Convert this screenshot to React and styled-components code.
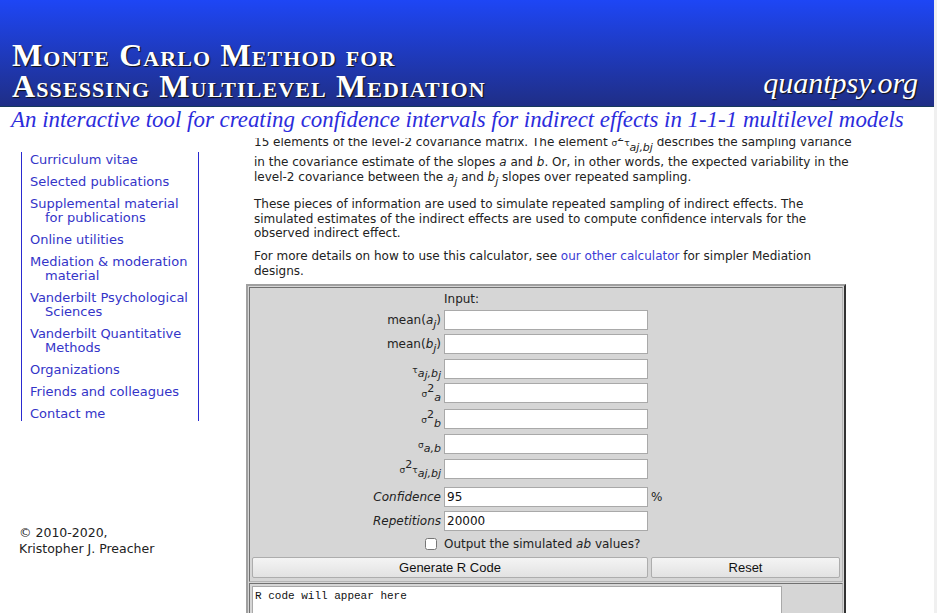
import React from 'react';
import styled, { createGlobalStyle, css } from 'styled-components';

const GlobalStyle = createGlobalStyle`
  html, body {
    margin: 0;
    padding: 0;
    overflow: hidden;
    background: #f0f0f0;
  }
  body {
    font-family: "DejaVu Sans", Verdana, sans-serif;
  }
`;

// sub/sup that do not stretch the line box
const scripts = css`
  sub, sup {
    font-size: 11px;
    line-height: 1;
    vertical-align: baseline;
    position: relative;
  }
  sub {
    top: 4px;
  }
  sup {
    top: -5px;
  }
`;

const Page = styled.div`
  width: 934px;
  height: 613px;
  background: #fff;
  overflow: hidden;
  display: flex;
  flex-direction: column;
`;

const Header = styled.header`
  flex: none;
  height: 107px;
  box-sizing: border-box;
  border-bottom: 1px solid #173a5c;
  background: linear-gradient(#1e46f5, #1f2e86);
  display: flex;
  align-items: flex-end;
  justify-content: space-between;
  padding: 0 16px 4px 12px;
`;

const Title = styled.h1`
  margin: 0;
  font-family: "Liberation Serif", "DejaVu Serif", serif;
  font-variant: small-caps;
  font-weight: bold;
  font-size: 32px;
  letter-spacing: 1.1px;
  line-height: 31px;
  color: #fff;
  text-shadow: 1px 1px 1px #111;
`;

const Site = styled.div`
  font-family: "Liberation Serif", "DejaVu Serif", serif;
  font-style: italic;
  font-size: 30px;
  line-height: 30px;
  padding-bottom: 4px;
  color: #fff;
  text-shadow: 1px 1px 1px #111;
`;

const Subtitle = styled.h2`
  flex: none;
  margin: 0;
  height: 31px;
  padding-left: 11px;
  font-family: "Liberation Serif", "DejaVu Serif", serif;
  font-style: italic;
  font-weight: normal;
  font-size: 22.9px;
  line-height: 25px;
  color: #2c2cdc;
  white-space: nowrap;
`;

const Body = styled.div`
  flex: 1;
  min-height: 0;
  display: flex;
`;

const Sidebar = styled.aside`
  flex: none;
  width: 246px;
  display: flex;
  flex-direction: column;
`;

const Nav = styled.ul`
  list-style: none;
  margin: 14px 0 0 21px;
  padding: 1px 0 0 8px;
  width: 168px;
  border-left: 1px solid #2a2ad0;
  border-right: 1px solid #2a2ad0;
  display: flex;
  flex-direction: column;
  gap: 8px;
`;

const NavLink = styled.a`
  display: block;
  padding-left: 15px;
  text-indent: -15px;
  font-size: 13px;
  line-height: 14px;
  color: #3434c8;
  text-decoration: none;
`;

const Copyright = styled.div`
  margin: auto 0 56px 19px;
  font-size: 12.5px;
  line-height: 16px;
  color: #222;
`;

const Main = styled.main`
  flex: none;
  width: 614px;
  overflow: hidden;
`;

const Content = styled.div`
  margin-top: -3px;
`;

const Para = styled.p`
  margin: 0 0 ${p => p.$gap || 7}px 8px;
  font-size: 12px;
  line-height: ${p => p.$lh || 15}px;
  color: #222;
  ${scripts}
`;

const LowSub = styled.span`
  display: inline-block;
  font-size: 11px;
  font-style: italic;
  line-height: 11px;
  vertical-align: -5px;
  padding-bottom: 2px;
`;

const Link = styled.a`
  color: #3a3ad6;
  text-decoration: none;
`;

const Table = styled.div`
  width: 600px;
  box-sizing: border-box;
  border: 2px solid;
  border-color: #a0a0a0 #333 #333 #a0a0a0;
  padding: 1px;
  background: #d6d6d6;
  display: flex;
  flex-direction: column;
  gap: 1px;
`;

const Cell = styled.div`
  border: 1px solid;
  border-color: #707070 #b4b4b4 #b4b4b4 #707070;
  padding: 2px 2px 3px;
  background: #d6d6d6;
`;

const FormGrid = styled.div`
  display: grid;
  grid-template-columns: 189px 204px 189px;
  grid-template-rows: 20px 24px 25px 24px 26px 25px 25px 28px 24px 24px 22px 21px;
  column-gap: 3px;
  align-items: start;
  font-size: 12px;
  color: #222;
`;

const Label = styled.div`
  text-align: right;
  white-space: nowrap;
  line-height: 20px;
  font-style: ${p => (p.$italic ? 'italic' : 'normal')};
  ${scripts}
  sub sub {
    top: 2px;
  }
`;

const Small = styled.span`
  font-size: 9px;
`;

const Heading = styled.div`
  grid-column: 2;
  padding-top: 1px;
  line-height: 16px;
`;

const Field = styled.input`
  box-sizing: border-box;
  width: 204px;
  height: 20px;
  margin: 0;
  padding: 0 2px;
  border: 1px solid #a9a9a9;
  background: #fff;
  font-family: "DejaVu Sans", sans-serif;
  font-size: 12px;
  color: #111;
  outline: none;
`;

const Unit = styled.div`
  line-height: 20px;
`;

const CheckText = styled.div`
  grid-column: 2 / 4;
  line-height: 18px;
`;

const Check = styled.input`
  justify-self: end;
  margin: 3px 4px 0 0;
  width: 12px;
  height: 12px;
`;

const Button = styled.button`
  box-sizing: border-box;
  height: 21px;
  margin: 0;
  border: 1px solid #adadad;
  border-radius: 2px;
  background: linear-gradient(#f4f4f4, #e2e2e2);
  font-family: "Liberation Sans", Arial, sans-serif;
  font-size: 13px;
  color: #111;
  grid-column: ${p => p.$span || 'auto'};
`;

const Output = styled.textarea`
  display: block;
  box-sizing: border-box;
  width: 530px;
  height: 200px;
  margin: 0;
  padding: 3px 2px;
  border: 1px solid #a9a9a9;
  resize: none;
  font-family: "Liberation Mono", monospace;
  font-size: 11px;
  color: #111;
`;

const navItems = [
  'Curriculum vitae',
  'Selected publications',
  'Supplemental material for publications',
  'Online utilities',
  'Mediation & moderation material',
  'Vanderbilt Psychological Sciences',
  'Vanderbilt Quantitative Methods',
  'Organizations',
  'Friends and colleagues',
  'Contact me',
];

export default function App() {
  return (
    <>
      <GlobalStyle />
      <Page>
        <Header>
          <Title>
            Monte Carlo Method for
            <br />
            Assessing Multilevel Mediation
          </Title>
          <Site>quantpsy.org</Site>
        </Header>
        <Subtitle>
          An interactive tool for creating confidence intervals for indirect effects in 1-1-1 multilevel models
        </Subtitle>
        <Body>
          <Sidebar>
            <Nav>
              {navItems.map(item => (
                <li key={item}>
                  <NavLink href="#">{item}</NavLink>
                </li>
              ))}
            </Nav>
            <Copyright>
              © 2010-2020,
              <br />
              Kristopher J. Preacher
            </Copyright>
          </Sidebar>
          <Main>
            <Content>
              <Para $gap={12}>
                15 elements of the level-2 covariance matrix. The element <Small>σ</Small>
                <sup>2</sup>
                <Small>τ</Small>
                <LowSub>aj,bj</LowSub> describes the sampling variance in the covariance estimate of the slopes{' '}
                <i>a</i> and <i>b</i>. Or, in other words, the expected variability in the level-2 covariance between
                the <i>a</i>
                <sub><i>j</i></sub> and <i>b</i>
                <sub><i>j</i></sub> slopes over repeated sampling.
              </Para>
              <Para $lh={14.6} $gap={8}>
                These pieces of information are used to simulate repeated sampling of indirect effects. The simulated
                estimates of the indirect effects are used to compute confidence intervals for the observed indirect
                effect.
              </Para>
              <Para $gap={5}>
                For more details on how to use this calculator, see <Link href="#">our other calculator</Link> for
                simpler Mediation designs.
              </Para>
              <Table>
                <Cell>
                  <FormGrid>
                    <Heading>Input:</Heading>
                    <div />
                    <Label>
                      mean(<i>a</i>
                      <sub><i>j</i></sub>)
                    </Label>
                    <Field />
                    <div />
                    <Label>
                      mean(<i>b</i>
                      <sub><i>j</i></sub>)
                    </Label>
                    <Field />
                    <div />
                    <Label>
                      <Small>τ</Small>
                      <sub>
                        <i>a</i>
                        <sub><i>j</i></sub>
                        <i>,b</i>
                        <sub><i>j</i></sub>
                      </sub>
                    </Label>
                    <Field />
                    <div />
                    <Label>
                      <Small>σ</Small>
                      <sup>2</sup>
                      <sub><i>a</i></sub>
                    </Label>
                    <Field />
                    <div />
                    <Label>
                      <Small>σ</Small>
                      <sup>2</sup>
                      <sub><i>b</i></sub>
                    </Label>
                    <Field />
                    <div />
                    <Label>
                      <Small>σ</Small>
                      <sub><i>a,b</i></sub>
                    </Label>
                    <Field />
                    <div />
                    <Label>
                      <Small>σ</Small>
                      <sup>2</sup>
                      <Small>τ</Small>
                      <sub><i>aj,bj</i></sub>
                    </Label>
                    <Field />
                    <div />
                    <Label $italic>Confidence</Label>
                    <Field defaultValue="95" />
                    <Unit>%</Unit>
                    <Label $italic>Repetitions</Label>
                    <Field defaultValue="20000" />
                    <div />
                    <Check type="checkbox" />
                    <CheckText>
                      Output the simulated <i>ab</i> values?
                    </CheckText>
                    <Button $span="1 / 3">Generate R Code</Button>
                    <Button>Reset</Button>
                  </FormGrid>
                </Cell>
                <Cell>
                  <Output defaultValue="R code will appear here" />
                </Cell>
              </Table>
            </Content>
          </Main>
        </Body>
      </Page>
    </>
  );
}
